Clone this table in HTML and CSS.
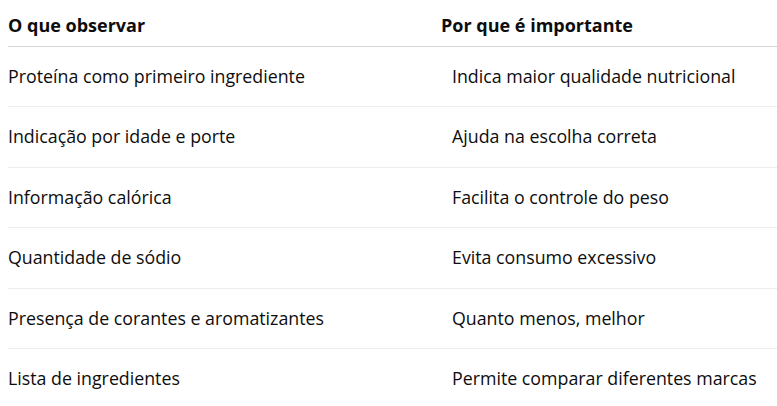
FILE: index.html
```html
<!DOCTYPE html>
<html lang="pt">
<head>
<meta charset="utf-8">
<link rel="stylesheet" href="styles.css">
</head>
<body>
<table class="tbl">
  <thead>
    <tr><th>O que observar</th><th>Por que é importante</th></tr>
  </thead>
  <tbody>
    <tr><td>Proteína como primeiro ingrediente</td><td>Indica maior qualidade nutricional</td></tr>
    <tr><td>Indicação por idade e porte</td><td>Ajuda na escolha correta</td></tr>
    <tr><td>Informação calórica</td><td>Facilita o controle do peso</td></tr>
    <tr><td>Quantidade de sódio</td><td>Evita consumo excessivo</td></tr>
    <tr><td>Presença de corantes e aromatizantes</td><td>Quanto menos, melhor</td></tr>
    <tr><td>Lista de ingredientes</td><td>Permite comparar diferentes marcas</td></tr>
  </tbody>
</table>
</body>
</html>
```
FILE: styles.css
```css
html, body {
  margin: 0;
  padding: 0;
  background: #ffffff;
}
body {
  font-family: "Open Sans", "Noto Sans", sans-serif;
  font-size: 17.8px;
  color: #0d0d0d;
  overflow: hidden;
}
.tbl {
  margin: 4px 0 0 8px;
  width: 777px;
  border-collapse: collapse;
  border-spacing: 0;
  table-layout: fixed;
}
.tbl th {
  text-align: left;
  font-size: 18px;
  font-weight: 700;
  line-height: 28px;
  padding: 7px 8px;
  border-bottom: 1px solid #d4d4d4;
  color: #0d0d0d;
}
.tbl th:first-child {
  padding-left: 0;
  width: 417px;
}
.tbl td {
  line-height: 27.4px;
  padding: 16px 8px 16px 19px;
  border-bottom: 1px solid #ececec;
  white-space: nowrap;
}
.tbl td:first-child {
  padding-left: 0;
}
.tbl tbody tr:last-child td {
  border-bottom: none;
}
```
